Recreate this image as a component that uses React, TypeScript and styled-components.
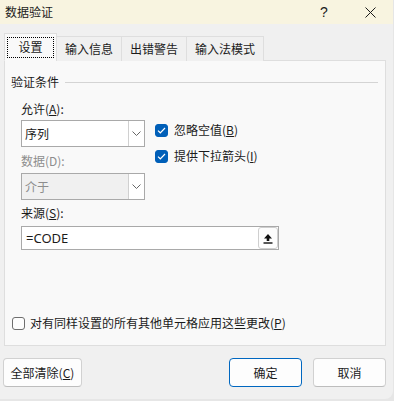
import React from "react";
import styled, { createGlobalStyle } from "styled-components";

const GlobalStyle = createGlobalStyle`
  html, body {
    margin: 0;
    padding: 0;
    background: #e6e6e6;
  }
  body {
    font-family: "Noto Sans CJK SC", "Noto Sans", sans-serif;
    font-size: 12px;
    color: #1b1b1b;
  }
`;

const Dialog = styled.div`
  width: 393px;
  height: 399px;
  background: #f0f0f0;
  border-bottom-right-radius: 8px;
  display: flex;
  flex-direction: column;
  overflow: hidden;
`;

const TitleBar = styled.div`
  height: 24px;
  background: #f8f4e0;
  display: flex;
  align-items: center;
  padding-left: 5px;
`;

const Title = styled.div`
  flex: 1;
  font-size: 12px;
  line-height: 16px;
`;

const TitleButton = styled.div<{ $w: number }>`
  width: ${(p) => p.$w}px;
  height: 24px;
  display: flex;
  align-items: center;
  justify-content: center;
  font-family: "Liberation Sans", sans-serif;
  font-size: 14px;
`;

const TabRow = styled.div`
  display: flex;
  align-items: flex-end;
  margin-top: 9px;
  padding-left: 4px;
  height: 28px;
  position: relative;
  z-index: 1;
`;

const Tab = styled.div<{ $active?: boolean }>`
  height: ${(p) => (p.$active ? 28 : 25)}px;
  padding: 0 ${(p) => (p.$active ? 2 : 8)}px;
  box-sizing: border-box;
  display: flex;
  align-items: center;
  background: ${(p) => (p.$active ? "#f9f9f9" : "#f0f0f0")};
  border: 1px solid #dedede;
  border-bottom: ${(p) => (p.$active ? "1px solid #f9f9f9" : "none")};
  margin-left: ${(p) => (p.$active ? 0 : -1)}px;
  line-height: 16px;
`;

const FocusBox = styled.span`
  display: flex;
  align-items: center;
  justify-content: center;
  width: 47px;
  height: 21px;
  box-sizing: border-box;
  border: 1px dotted #000;
`;

const Panel = styled.div`
  margin: -1px 7px 0 4px;
  height: 286px;
  box-sizing: border-box;
  background: #f9f9f9;
  border: 1px solid #dedede;
  display: flex;
  flex-direction: column;
  padding: 13px 7px 0 6px;
`;

const GroupHeader = styled.div`
  display: flex;
  align-items: center;
  gap: 6px;
  line-height: 16px;
  &::after {
    content: "";
    flex: 1;
    height: 1px;
    background: #d4d4d4;
  }
`;

const Form = styled.div`
  padding-left: 10px;
  display: flex;
  flex-direction: column;
  flex: 1;
`;

const TopRow = styled.div`
  display: flex;
  gap: 10px;
  margin-top: 11px;
`;

const Column = styled.div`
  display: flex;
  flex-direction: column;
`;

const Label = styled.div<{ $disabled?: boolean; $top?: number }>`
  line-height: 16px;
  margin-top: ${(p) => p.$top ?? 0}px;
  color: ${(p) => (p.$disabled ? "#8d8d8d" : "#1b1b1b")};
`;

const Combo = styled.div<{ $disabled?: boolean; $top: number }>`
  width: 124px;
  height: 27px;
  margin-top: ${(p) => p.$top}px;
  box-sizing: border-box;
  border: 1px solid #a9a9a9;
  background: ${(p) => (p.$disabled ? "#f0f0f0" : "#fff")};
  color: ${(p) => (p.$disabled ? "#8d8d8d" : "#1b1b1b")};
  display: flex;
  align-items: center;
`;

const ComboText = styled.div`
  flex: 1;
  padding-left: 3px;
  font-size: 12px;
`;

const ComboButton = styled.div`
  width: 16px;
  height: 25px;
  box-sizing: border-box;
  border-left: 1px solid #d0d0d0;
  background: #fff;
  display: flex;
  align-items: center;
  justify-content: center;
`;

const CheckRow = styled.label<{ $top: number }>`
  display: flex;
  align-items: center;
  gap: 6px;
  margin-top: ${(p) => p.$top}px;
  line-height: 16px;
`;

const Box = styled.span<{ $checked?: boolean }>`
  width: 13px;
  height: 13px;
  box-sizing: border-box;
  border-radius: 3px;
  background: ${(p) => (p.$checked ? "#005fb8" : "#fdfdfd")};
  border: 1px solid ${(p) => (p.$checked ? "#005fb8" : "#6e6e6e")};
  display: flex;
  align-items: center;
  justify-content: center;
`;

const SourceInput = styled.div`
  width: 258px;
  height: 24px;
  margin-top: 5px;
  box-sizing: border-box;
  border: 1px solid #a9a9a9;
  background: #fff;
  display: flex;
  align-items: center;
  justify-content: space-between;
  padding-left: 4px;
`;

const SourceText = styled.span`
  font-family: "Noto Sans", sans-serif;
  font-size: 13px;
`;

const PickButton = styled.div`
  width: 20px;
  height: 22px;
  box-sizing: border-box;
  border: 1px solid #cfcfcf;
  border-radius: 3px;
  background: #fdfdfd;
  display: flex;
  align-items: center;
  justify-content: center;
`;

const Spacer = styled.div`
  flex: 1;
`;

const BottomCheck = styled(CheckRow)`
  margin-left: -9px;
  margin-bottom: 14px;
  gap: 5px;
`;

const Footer = styled.div`
  display: flex;
  align-items: center;
  padding: 12px 7px 0 3px;
  gap: 11px;
`;

const Button = styled.div<{ $primary?: boolean; $w: number }>`
  width: ${(p) => p.$w}px;
  height: 29px;
  box-sizing: border-box;
  border: 1px solid ${(p) => (p.$primary ? "#0067c0" : "#d1d1d1")};
  border-bottom-color: ${(p) => (p.$primary ? "#0067c0" : "#bdbdbd")};
  border-radius: 4px;
  background: #fdfdfd;
  display: flex;
  align-items: center;
  justify-content: center;
  line-height: 16px;
`;

const Chevron = () => (
  <svg width="9" height="5" viewBox="0 0 9 5">
    <path d="M0.5 0.5 L4.5 4.5 L8.5 0.5" fill="none" stroke="#666" strokeWidth="1" />
  </svg>
);

const Check = () => (
  <svg width="9" height="7" viewBox="0 0 9 7">
    <path d="M1 3.6 L3.3 5.8 L8 1" fill="none" stroke="#fff" strokeWidth="1.2" />
  </svg>
);

const App = () => {
  return (
    <>
      <GlobalStyle />
      <Dialog>
        <TitleBar>
          <Title>数据验证</Title>
          <TitleButton $w={46}>?</TitleButton>
          <TitleButton $w={46}>
            <svg width="11" height="11" viewBox="0 0 11 11">
              <path d="M0.5 0.5 L10.5 10.5 M10.5 0.5 L0.5 10.5" stroke="#1b1b1b" strokeWidth="1" />
            </svg>
          </TitleButton>
        </TitleBar>

        <TabRow>
          <Tab $active>
            <FocusBox>设置</FocusBox>
          </Tab>
          <Tab>输入信息</Tab>
          <Tab>出错警告</Tab>
          <Tab>输入法模式</Tab>
        </TabRow>

        <Panel>
          <GroupHeader>验证条件</GroupHeader>
          <Form>
            <TopRow>
              <Column>
                <Label>
                  允许(<u>A</u>):
                </Label>
                <Combo $top={3}>
                  <ComboText>序列</ComboText>
                  <ComboButton>
                    <Chevron />
                  </ComboButton>
                </Combo>
                <Label $disabled $top={6}>
                  数据(D):
                </Label>
                <Combo $disabled $top={4}>
                  <ComboText>介于</ComboText>
                  <ComboButton>
                    <Chevron />
                  </ComboButton>
                </Combo>
              </Column>
              <Column>
                <CheckRow $top={21}>
                  <Box $checked>
                    <Check />
                  </Box>
                  <span>
                    忽略空值(<u>B</u>)
                  </span>
                </CheckRow>
                <CheckRow $top={10}>
                  <Box $checked>
                    <Check />
                  </Box>
                  <span>
                    提供下拉箭头(<u>I</u>)
                  </span>
                </CheckRow>
              </Column>
            </TopRow>
            <Label $top={5}>
              来源(<u>S</u>):
            </Label>
            <SourceInput>
              <SourceText>=CODE</SourceText>
              <PickButton>
                <svg width="10" height="11" viewBox="0 0 10 11">
                  <path d="M5 1 L9 5.5 L6.3 5.5 L6.3 8 L3.7 8 L3.7 5.5 L1 5.5 Z" fill="#111" />
                  <rect x="0.5" y="9.3" width="9" height="1.4" fill="#111" />
                </svg>
              </PickButton>
            </SourceInput>
            <Spacer />
            <BottomCheck $top={0}>
              <Box />
              <span>
                对有同样设置的所有其他单元格应用这些更改(<u>P</u>)
              </span>
            </BottomCheck>
          </Form>
        </Panel>

        <Footer>
          <Button $w={79}>
            全部清除(<u>C</u>)
          </Button>
          <Spacer />
          <Button $primary $w={73}>
            确定
          </Button>
          <Button $w={73}>取消</Button>
        </Footer>
      </Dialog>
    </>
  );
};

export default App;
